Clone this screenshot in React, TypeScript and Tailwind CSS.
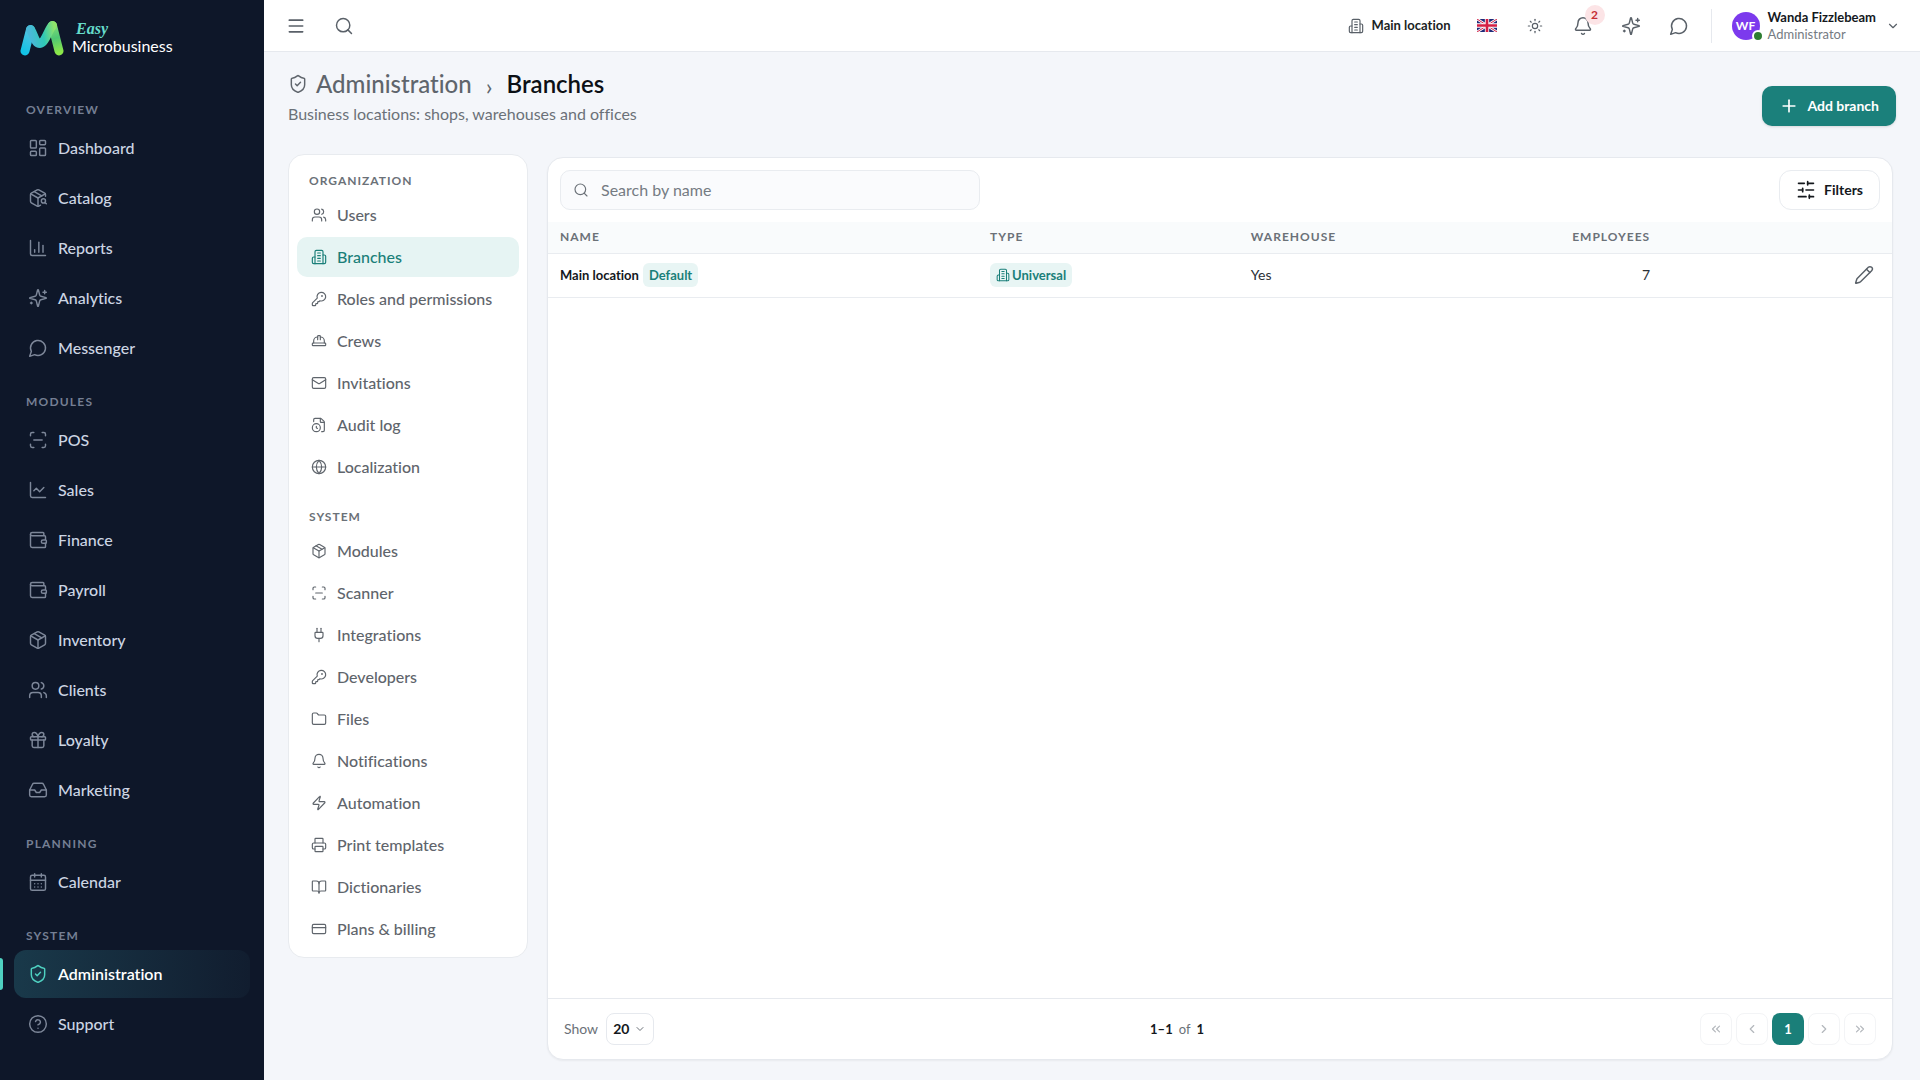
import type { ComponentType, ReactNode } from 'react';
import {
    Bell,
    BookOpen,
    CalendarDays,
    ChartColumn,
    ChartLine,
    ChevronDown,
    ChevronLeft,
    ChevronRight,
    ChevronsLeft,
    ChevronsRight,
    CircleHelp,
    CreditCard,
    FileClock,
    Folder,
    Gift,
    Globe,
    HardHat,
    Inbox,
    KeyRound,
    LayoutDashboard,
    Mail,
    Menu,
    Package,
    PackageSearch,
    Pencil,
    Plug,
    Plus,
    Printer,
    ScanLine,
    Search,
    ShieldCheck,
    Sun,
    Users,
    Wallet,
    Zap,
} from 'lucide-react';

type IconProps = { size?: number | string; strokeWidth?: number | string; className?: string };
type IconType = ComponentType<IconProps>;
type NavEntry = { label: string; icon: IconType; active?: boolean };
type NavGroup = { title: string; items: NavEntry[] };

const Glyph = ({
    size = 24,
    strokeWidth = 2,
    className,
    children,
}: IconProps & { children: ReactNode }) => (
    <svg
        width={size}
        height={size}
        viewBox="0 0 24 24"
        fill="none"
        stroke="currentColor"
        strokeWidth={strokeWidth}
        strokeLinecap="round"
        strokeLinejoin="round"
        className={className}
        aria-hidden="true"
    >
        {children}
    </svg>
);

const BuildingIcon = (props: IconProps) => (
    <Glyph {...props}>
        <path d="M6 22V4a2 2 0 0 1 2-2h8a2 2 0 0 1 2 2v18Z" />
        <path d="M6 12H4a2 2 0 0 0-2 2v6a2 2 0 0 0 2 2h2" />
        <path d="M18 9h2a2 2 0 0 1 2 2v9a2 2 0 0 1-2 2h-2" />
        <path d="M10 6h4M10 10h4M10 14h4M10 18h4" />
    </Glyph>
);

const ChatIcon = (props: IconProps) => (
    <Glyph {...props}>
        <path d="M7.9 20A9 9 0 1 0 4 16.1L2 22Z" />
    </Glyph>
);

const SparklesIcon = (props: IconProps) => (
    <Glyph {...props}>
        <path d="M9.937 15.5A2 2 0 0 0 8.5 14.063l-6.135-1.582a.5.5 0 0 1 0-.962L8.5 9.936A2 2 0 0 0 9.937 8.5l1.582-6.135a.5.5 0 0 1 .963 0L14.063 8.5A2 2 0 0 0 15.5 9.937l6.135 1.581a.5.5 0 0 1 0 .964L15.5 14.063a2 2 0 0 0-1.437 1.437l-1.582 6.135a.5.5 0 0 1-.963 0z" />
        <path d="M20 3v4M22 5h-4M4 17v2M5 18H3" />
    </Glyph>
);

const SlidersIcon = (props: IconProps) => (
    <Glyph {...props}>
        <path d="M21 4h-7M10 4H3M21 12h-9M8 12H3M21 20h-5M12 20H3" />
        <path d="M14 2v4M8 10v4M16 18v4" />
    </Glyph>
);

const LogoMark = () => (
    <svg width="44" height="36" viewBox="0 0 44 36" fill="none" aria-hidden="true">
        <defs>
            <linearGradient id="logo-left" x1="4" y1="32" x2="22" y2="8" gradientUnits="userSpaceOnUse">
                <stop offset="0" stopColor="#12c3e6" />
                <stop offset="0.6" stopColor="#4cc3e0" />
                <stop offset="1" stopColor="#1899a6" />
            </linearGradient>
            <linearGradient id="logo-mid" x1="10" y1="10" x2="34" y2="6" gradientUnits="userSpaceOnUse">
                <stop offset="0" stopColor="#49b9d8" />
                <stop offset="0.5" stopColor="#2fc9b6" />
                <stop offset="1" stopColor="#8fe36a" />
            </linearGradient>
            <linearGradient id="logo-right" x1="32" y1="4" x2="40" y2="32" gradientUnits="userSpaceOnUse">
                <stop offset="0" stopColor="#86df78" />
                <stop offset="0.5" stopColor="#4fc774" />
                <stop offset="1" stopColor="#8be84a" />
            </linearGradient>
        </defs>
        <g strokeWidth="9" strokeLinecap="round" strokeLinejoin="round">
            <path d="M32.500 5.500 39 31" stroke="url(#logo-right)" />
            <path d="M5 31 10.500 9.500" stroke="url(#logo-left)" />
            <path d="M10.500 9.500C14 15 15 23.500 20 23.500S28.500 9 32.500 5.500" stroke="url(#logo-mid)" />
        </g>
    </svg>
);

const UnionJack = () => (
    <svg width="20" height="13" viewBox="0 0 60 39" preserveAspectRatio="none" aria-hidden="true">
        <rect width="60" height="39" fill="#1f2a78" />
        <path d="M0 0 60 39M60 0 0 39" stroke="#fff" strokeWidth="8" />
        <path d="M0 0 60 39M60 0 0 39" stroke="#d32045" strokeWidth="3" />
        <path d="M30 0V39M0 19.500H60" stroke="#fff" strokeWidth="13" />
        <path d="M30 0V39M0 19.500H60" stroke="#d32045" strokeWidth="8" />
    </svg>
);

const MAIN_NAV: NavGroup[] = [
    {
        title: 'Overview',
        items: [
            { label: 'Dashboard', icon: LayoutDashboard },
            { label: 'Catalog', icon: PackageSearch },
            { label: 'Reports', icon: ChartColumn },
            { label: 'Analytics', icon: SparklesIcon },
            { label: 'Messenger', icon: ChatIcon },
        ],
    },
    {
        title: 'Modules',
        items: [
            { label: 'POS', icon: ScanLine },
            { label: 'Sales', icon: ChartLine },
            { label: 'Finance', icon: Wallet },
            { label: 'Payroll', icon: Wallet },
            { label: 'Inventory', icon: Package },
            { label: 'Clients', icon: Users },
            { label: 'Loyalty', icon: Gift },
            { label: 'Marketing', icon: Inbox },
        ],
    },
    { title: 'Planning', items: [{ label: 'Calendar', icon: CalendarDays }] },
    {
        title: 'System',
        items: [
            { label: 'Administration', icon: ShieldCheck, active: true },
            { label: 'Support', icon: CircleHelp },
        ],
    },
];

const ADMIN_NAV: NavGroup[] = [
    {
        title: 'Organization',
        items: [
            { label: 'Users', icon: Users },
            { label: 'Branches', icon: BuildingIcon, active: true },
            { label: 'Roles and permissions', icon: KeyRound },
            { label: 'Crews', icon: HardHat },
            { label: 'Invitations', icon: Mail },
            { label: 'Audit log', icon: FileClock },
            { label: 'Localization', icon: Globe },
        ],
    },
    {
        title: 'System',
        items: [
            { label: 'Modules', icon: Package },
            { label: 'Scanner', icon: ScanLine },
            { label: 'Integrations', icon: Plug },
            { label: 'Developers', icon: KeyRound },
            { label: 'Files', icon: Folder },
            { label: 'Notifications', icon: Bell },
            { label: 'Automation', icon: Zap },
            { label: 'Print templates', icon: Printer },
            { label: 'Dictionaries', icon: BookOpen },
            { label: 'Plans & billing', icon: CreditCard },
        ],
    },
];

const Sidebar = () => (
    <aside className="w-[264px] shrink-0 bg-[#0e1729]">
        <a href="#home" className="flex items-center gap-2 px-5 pt-5">
            <LogoMark />
            <span className="flex flex-col text-white">
                <span className="pl-1 font-['Liberation_Serif',serif] text-base leading-4 font-bold text-[#66dccb] italic">
                    Easy
                </span>
                <span className="leading-[18px]">Microbusiness</span>
            </span>
        </a>
        <nav className="flex flex-col gap-[22px] pt-[46px]">
            {MAIN_NAV.map((group) => (
                <div key={group.title}>
                    <h2 className="px-[26px] pb-1.5 text-xs leading-4 font-bold tracking-widest text-[#757f93] uppercase">
                        {group.title}
                    </h2>
                    <ul className="flex flex-col gap-0.5">
                        {group.items.map(({ label, icon: Icon, active }) => (
                            <li key={label} className="relative px-3.5">
                                {active && (
                                    <span className="absolute top-2 left-0 h-8 w-[3px] rounded-r bg-[#4fd1c1]" />
                                )}
                                <a
                                    href="#nav"
                                    className={
                                        active
                                            ? 'flex h-12 items-center gap-2.5 rounded-xl bg-linear-to-r from-[#19394a] to-[#111d2f] px-3.5 font-semibold text-white'
                                            : 'flex h-12 items-center gap-2.5 rounded-xl px-3.5 font-medium text-[#ccd5e3]'
                                    }
                                >
                                    <Icon
                                        size={20}
                                        strokeWidth={1.75}
                                        className={active ? 'text-[#4fd1c1]' : 'text-[#7d8799]'}
                                    />
                                    {label}
                                </a>
                            </li>
                        ))}
                    </ul>
                </div>
            ))}
        </nav>
    </aside>
);

const TopBar = () => (
    <header className="flex h-[52px] shrink-0 items-center border-b border-[#e6e9ee] bg-white pr-5 pl-[22px] text-[#596068]">
        <div className="flex items-center gap-7">
            <button type="button" aria-label="Toggle menu">
                <Menu size={20} strokeWidth={2} />
            </button>
            <button type="button" aria-label="Search">
                <Search size={20} strokeWidth={1.75} />
            </button>
        </div>
        <div className="ml-auto flex items-center">
            <button
                type="button"
                className="mr-[26px] flex items-center gap-2 text-[13px] font-bold text-[#1b1f24]"
            >
                <BuildingIcon size={16} strokeWidth={1.75} className="text-[#596068]" />
                Main location
            </button>
            <div className="flex items-center gap-7">
                <button type="button" aria-label="Language">
                    <UnionJack />
                </button>
                <button type="button" aria-label="Theme" className="flex w-5 justify-center">
                    <Sun size={16} strokeWidth={1.75} />
                </button>
                <button type="button" aria-label="Notifications" className="relative">
                    <Bell size={20} strokeWidth={1.75} />
                    <span className="absolute -top-[11px] left-3 flex size-5 items-center justify-center rounded-full bg-[#fce4e6] text-xs font-bold text-[#c62f36]">
                        2
                    </span>
                </button>
                <button type="button" aria-label="Assistant">
                    <SparklesIcon size={20} strokeWidth={1.75} />
                </button>
                <button type="button" aria-label="Messages">
                    <ChatIcon size={20} strokeWidth={1.75} />
                </button>
            </div>
            <button
                type="button"
                className="ml-[22px] flex items-center border-l border-[#e6e9ee] pl-5 text-left"
            >
                <span className="relative mr-2 flex size-7 items-center justify-center rounded-full bg-[#7c3aed] text-xs font-bold text-white">
                    WF
                    <span className="absolute -right-1 -bottom-0.5 size-3 rounded-full border-2 border-white bg-[#2e7d32]" />
                </span>
                <span className="mr-2.5 flex flex-col text-[13px] leading-[17px] text-[#757b83]">
                    <span className="font-bold text-[#14181d]">Wanda Fizzlebeam</span>
                    Administrator
                </span>
                <ChevronDown size={14} strokeWidth={2} />
            </button>
        </div>
    </header>
);

const AdminMenu = () => (
    <nav className="w-60 shrink-0 self-start rounded-2xl border border-[#e8ebef] bg-white p-2">
        {ADMIN_NAV.map((group, index) => (
            <div key={group.title} className={index > 0 ? 'pt-3' : ''}>
                <h2 className="px-3 pt-2.5 pb-1.5 text-xs leading-4 font-bold tracking-[1px] text-[#6b7178] uppercase">
                    {group.title}
                </h2>
                <ul className="flex flex-col gap-0.5">
                    {group.items.map(({ label, icon: Icon, active }) => (
                        <li key={label}>
                            <a
                                href="#admin"
                                className={
                                    active
                                        ? 'flex h-10 items-center gap-2.5 rounded-[10px] bg-[#e6f4f3] px-3.5 font-medium text-[#1a7f79]'
                                        : 'flex h-10 items-center gap-2.5 rounded-[10px] px-3.5 font-medium text-[#5f656c]'
                                }
                            >
                                <Icon size={16} strokeWidth={1.75} />
                                {label}
                            </a>
                        </li>
                    ))}
                </ul>
            </div>
        ))}
    </nav>
);

const PAGER_BUTTON =
    'flex size-8 items-center justify-center rounded-lg border border-[#f3f4f6] text-[#b3b7bc]';

const BranchesTable = () => (
    <section className="mt-[3px] mr-[3px] flex min-w-0 grow flex-col rounded-2xl border border-[#e6e9ee] bg-white shadow-xs">
        <div className="flex items-center justify-between p-3">
            <label className="flex h-10 w-[420px] items-center gap-3 rounded-[10px] border border-[#e9ecf0] bg-[#fafbfd] px-3 text-[#6b7178]">
                <Search size={16} strokeWidth={1.75} />
                <input
                    type="search"
                    aria-label="Search by name"
                    placeholder="Search by name"
                    className="min-w-0 grow bg-transparent outline-none placeholder:text-[#757b83]"
                />
            </label>
            <button
                type="button"
                className="flex h-10 items-center gap-2 rounded-xl border border-[#e9ecf0] px-4 text-sm font-bold text-[#14181d]"
            >
                <SlidersIcon size={20} strokeWidth={2} />
                Filters
            </button>
        </div>
        <table className="w-full table-fixed text-left">
            <thead>
                <tr className="h-[31px] border-b border-[#e9ecf0] bg-[#f9fbfc] text-xs tracking-[1px] text-[#6b7178] uppercase">
                    <th className="w-[32%] px-3 font-bold">Name</th>
                    <th className="w-[19.4%] px-3 font-bold">Type</th>
                    <th className="w-[15.5%] px-3 font-bold">Warehouse</th>
                    <th className="w-[16%] px-3 text-right font-bold">Employees</th>
                    <th aria-label="Actions" />
                </tr>
            </thead>
            <tbody>
                <tr className="h-11 border-b border-[#e9ecf0] text-sm text-[#2b3036]">
                    <td className="px-3">
                        <div className="flex items-center gap-1 text-[13px] leading-5 font-bold text-[#14181d]">
                            Main location
                            <span className="rounded-md bg-[#e8f5f4] px-1.5 py-0.5 text-[#1a7f79]">
                                Default
                            </span>
                        </div>
                    </td>
                    <td className="px-3">
                        <div className="flex w-fit items-center gap-0.5 rounded-md bg-[#e8f5f4] px-1.5 py-0.5 text-[13px] leading-5 font-bold text-[#1a7f79]">
                            <BuildingIcon size={14} strokeWidth={1.75} />
                            Universal
                        </div>
                    </td>
                    <td className="px-3">Yes</td>
                    <td className="px-3 text-right">7</td>
                    <td className="pr-[18px]">
                        <button
                            type="button"
                            aria-label="Edit branch"
                            className="ml-auto block text-[#596068]"
                        >
                            <Pencil size={20} strokeWidth={1.75} />
                        </button>
                    </td>
                </tr>
            </tbody>
        </table>
        <footer className="mt-auto flex items-center justify-between border-t border-[#e6e9ee] px-4 py-3.5 text-sm text-[#6b7178]">
            <label className="flex items-center gap-2">
                Show
                <span className="relative">
                    <select className="h-8 w-12 appearance-none rounded-lg border border-[#e6e9ee] pl-1.5 font-bold text-[#14181d]">
                        <option>20</option>
                        <option>50</option>
                    </select>
                    <ChevronDown
                        size={12}
                        className="pointer-events-none absolute top-2.5 right-2"
                    />
                </span>
            </label>
            <p className="flex gap-1.5 text-[13px]">
                <b className="text-[#14181d]">1–1</b>
                <span>of</span>
                <b className="text-[#14181d]">1</b>
            </p>
            <div className="flex justify-end gap-1">
                <button type="button" disabled aria-label="First page" className={PAGER_BUTTON}>
                    <ChevronsLeft size={14} />
                </button>
                <button type="button" disabled aria-label="Previous page" className={PAGER_BUTTON}>
                    <ChevronLeft size={14} />
                </button>
                <button
                    type="button"
                    className="size-8 rounded-lg bg-[#1a7f79] text-[13px] font-bold text-white"
                >
                    1
                </button>
                <button type="button" disabled aria-label="Next page" className={PAGER_BUTTON}>
                    <ChevronRight size={14} />
                </button>
                <button type="button" disabled aria-label="Last page" className={PAGER_BUTTON}>
                    <ChevronsRight size={14} />
                </button>
            </div>
        </footer>
    </section>
);

export default function App() {
    return (
        <div className="flex min-h-screen bg-[#f4f6fa] font-[Lato,sans-serif] text-base [font-variant-ligatures:none]">
            <Sidebar />
            <div className="flex min-w-0 grow flex-col">
                <TopBar />
                <main className="flex grow flex-col px-6 pt-3.5 pb-5">
                    <div className="mb-7 flex items-end justify-between">
                        <div>
                            <div className="flex items-center text-2xl leading-8 text-[#5f656c]">
                                <ShieldCheck size={20} strokeWidth={1.75} />
                                <a href="#administration" className="ml-2 font-medium">
                                    Administration
                                </a>
                                <span className="mx-3.5 pt-1">›</span>
                                <h1 className="font-semibold text-[#0c1015]">Branches</h1>
                            </div>
                            <p className="leading-6 text-[#6b7178]">
                                Business locations: shops, warehouses and offices
                            </p>
                        </div>
                        <button
                            type="button"
                            className="flex h-10 items-center gap-2 rounded-[10px] bg-[#1b807b] px-[17px] text-sm font-bold text-white shadow-sm"
                        >
                            <Plus size={20} strokeWidth={2} />
                            Add branch
                        </button>
                    </div>
                    <div className="flex grow gap-[19px]">
                        <AdminMenu />
                        <BranchesTable />
                    </div>
                </main>
            </div>
        </div>
    );
}
